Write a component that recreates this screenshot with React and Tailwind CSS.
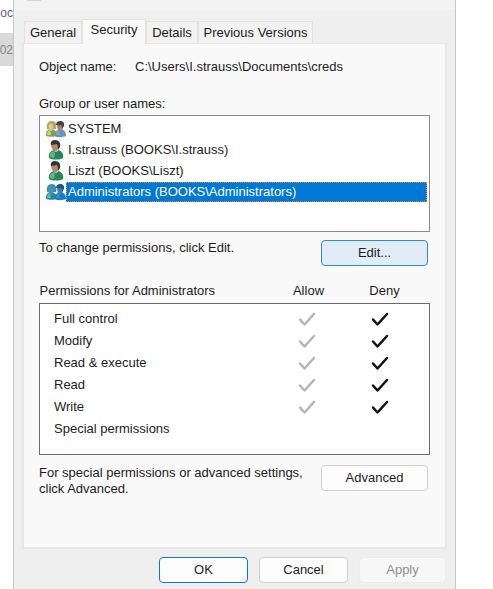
const TABS = [
  { name: 'General', width: 'w-[58px]' },
  { name: 'Security', width: 'w-[64px]', active: true },
  { name: 'Details', width: 'w-[52px]' },
  { name: 'Previous Versions', width: 'w-[115px]' },
];

const PRINCIPALS = [
  { name: 'SYSTEM', icon: 'group' },
  { name: 'I.strauss (BOOKS\\I.strauss)', icon: 'user' },
  { name: 'Liszt (BOOKS\\Liszt)', icon: 'user' },
  { name: 'Administrators (BOOKS\\Administrators)', icon: 'group', selected: true },
];

const PERMISSIONS = [
  { name: 'Full control', set: true },
  { name: 'Modify', set: true },
  { name: 'Read & execute', set: true },
  { name: 'Read', set: true },
  { name: 'Write', set: true },
  { name: 'Special permissions', set: false },
];

function UserIcon() {
  return (
    <svg width="20" height="20" viewBox="0 0 20 20" aria-hidden="true">
      <path d="M3 18c-1-4 1-7 5-8h4c4 1 6 4 5 8-3 2-11 2-14 0z" fill="#26855b" />
      <path d="M4 17c-1-3 1-5 4-6l1 3-1 4z" fill="#6aaf88" />
      <path d="M8 9h4v2l-2 1-2-1z" fill="#cfd8cb" />
      <path d="M5 4c0-3 8-3 8 1 0 4-2 6-4 6S5 8 5 4z" fill="#b08a70" />
      <path d="M5 5C4 1 7 0 9 0c4 0 6 3 5 7l-2 3c0-3 0-4-1-6-2 0-4 1-6 1z" fill="#3a332d" />
    </svg>
  );
}

function GroupIcon({ selected }) {
  const c = selected
    ? { hairA: '#3f8fae', faceA: '#4a94b9', bodyA: '#258a9b', shine: '#62b4c6', hairB: '#22597f', faceB: '#3f80bb', bodyB: '#1878cf' }
    : { hairA: '#b7a45e', faceA: '#dfc59b', bodyA: '#7fa63d', shine: '#bfd58b', hairB: '#4b4540', faceB: '#a88370', bodyB: '#5f93c9' };
  return (
    <svg width="20" height="18" viewBox="0 0 20 18" aria-hidden="true">
      <path d="M0 16c0-4 1-7 5-7s6 3 6 7c-3 1-8 1-11 0z" fill={c.bodyA} />
      <path d="M1 15c0-3 1-4 3-5l1 5z" fill={c.shine} />
      <path d="M1 9C0 4 2 1 6 1s5 4 4 8z" fill={c.hairA} />
      <path d="M3 4c2-1 4 0 4 2 0 3-1 5-2 5S2 8 3 4z" fill={c.faceA} />
      <path d="M9 16c0-4 2-7 5-7s6 2 6 7c-3 1-8 2-11 0z" fill={c.bodyB} />
      <path d="M10 15c0-3 1-4 3-5l1 5z" fill={c.shine} fillOpacity="0.35" />
      <path d="M11 5c0-3 6-3 6 1 0 3-1 5-3 5s-3-3-3-6z" fill={c.faceB} />
      <path d="M10 5c0-3 2-4 4-4 3 0 5 2 4 5l-2 3c0-2 0-3-1-4-2 1-3 0-5 0z" fill={c.hairB} />
    </svg>
  );
}

function Mark({ label, className }) {
  return (
    <svg role="img" aria-label={label} className={'mx-auto block ' + className} width="18" height="16" viewBox="0 0 18 16" fill="none" stroke="currentColor" strokeWidth="2.5" strokeLinecap="round" strokeLinejoin="round">
      <path d="M2 8.5 6.5 13.5 16 3" />
    </svg>
  );
}

function PushButton({ children, className }) {
  return (
    <button type="button" className={'h-[26px] rounded-[4px] border ' + className}>
      {children}
    </button>
  );
}

export default function App() {
  return (
    <div className="flex h-screen overflow-hidden bg-white font-['Liberation_Sans',Arial,sans-serif] text-[13px] leading-4 text-[#1c1c1c]">
      <aside className="flex w-[13px] shrink-0 flex-col overflow-hidden whitespace-nowrap text-[12px]">
        <div className="flex h-[33px] items-center justify-end pb-2 text-[#5b6475]">oc</div>
        <div className="flex h-[33px] items-center justify-end bg-[#d9d9d9] text-[#858585]">202</div>
      </aside>

      <main className="flex min-w-0 flex-1 flex-col border-x border-[#c6c6c6] bg-[#efefef]">
        <div className="h-[10px] shrink-0 bg-[#f3f3f3] pl-[13px]">
          <div className="h-[1px] w-[14px] bg-[#d5d5d5]" />
        </div>

        <div className="flex flex-col px-2 pt-[9px]">
          <div role="tablist" className="flex items-end pl-[2px]">
            {TABS.map((t) => (
              <button
                key={t.name}
                type="button"
                role="tab"
                aria-selected={!!t.active}
                className={
                  'whitespace-nowrap border border-b-0 border-[#e2e2e2] ' + t.width +
                  (t.active ? ' z-10 -mb-px h-[25px] bg-[#f9f9f9] pb-1' : ' h-[22px] bg-[#f2f2f2]')
                }
              >
                {t.name}
              </button>
            ))}
          </div>

          <section className="border-2 border-t border-[#e6e6e6] bg-[#f9f9f9] px-[15px] pt-[15px] pb-[50px]">
            <dl className="flex">
              <dt className="w-24">Object name:</dt>
              <dd>C:\Users\I.strauss\Documents\creds</dd>
            </dl>

            <h2 id="names" className="mt-[21px]">Group or user names:</h2>
            <ul role="listbox" aria-labelledby="names" className="mt-[3px] h-[117px] border border-[#858b91] bg-white py-[2px] pr-[2px] pl-[6px]">
              {PRINCIPALS.map((p) => (
                <li key={p.name} role="option" aria-selected={!!p.selected} className="flex h-[21px] items-center">
                  <span className="flex w-[20px] shrink-0">
                    {p.icon === 'user' ? <UserIcon /> : <GroupIcon selected={p.selected} />}
                  </span>
                  <span
                    className={
                      'flex h-5 flex-1 items-center border pl-px ' +
                      (p.selected ? 'border-dotted border-[#e88f3c] bg-[#0078d7] text-white' : 'border-transparent')
                    }
                  >
                    {p.name}
                  </span>
                </li>
              ))}
            </ul>

            <div className="mt-2 flex items-start justify-between pr-[2px]">
              <p>To change permissions, click Edit.</p>
              <PushButton className="w-[107px] border-[#2c8bd6] bg-[#e0edf9]">Edit...</PushButton>
            </div>

            <table className="mt-[17px] w-full table-fixed border-collapse">
              <thead>
                <tr className="h-5 align-top">
                  <th className="text-left font-normal">Permissions for Administrators</th>
                  <th className="w-[62px] font-normal">Allow</th>
                  <th className="w-[90px] font-normal">Deny</th>
                </tr>
              </thead>
              <tbody className="border border-[#6b6b6b] bg-white">
                <tr aria-hidden="true" className="h-[5px]"><td colSpan={3} /></tr>
                {PERMISSIONS.map((p) => (
                  <tr key={p.name} className="h-[22px]">
                    <th scope="row" className="pl-[14px] text-left font-normal">{p.name}</th>
                    <td className="pr-[4px]">{p.set && <Mark label="Allowed" className="text-[#b5b5b5]" />}</td>
                    <td className="pr-[8px]">{p.set && <Mark label="Denied" className="text-[#111]" />}</td>
                  </tr>
                ))}
                <tr aria-hidden="true" className="h-[14px]"><td colSpan={3} /></tr>
              </tbody>
            </table>

            <div className="mt-[10px] flex items-start justify-between pr-[2px]">
              <p>
                For special permissions or advanced settings,
                <br />
                click Advanced.
              </p>
              <PushButton className="w-[107px] shrink-0 border-[#d0d0d0] bg-[#fdfdfd]">Advanced</PushButton>
            </div>
          </section>

          <footer className="mt-2 flex justify-end gap-[11px] pr-px">
            <PushButton className="w-[89px] border-[#0f78d0] bg-[#fdfdfd]">OK</PushButton>
            <PushButton className="w-[89px] border-[#d0d0d0] bg-[#fdfdfd]">Cancel</PushButton>
            <button type="button" disabled className="h-[26px] w-[87px] rounded-[4px] border border-[#ebebeb] bg-[#f7f7f7] text-[#8f8f8f]">
              Apply
            </button>
          </footer>
        </div>
      </main>

      <div className="w-[37px] shrink-0" />
    </div>
  );
}
